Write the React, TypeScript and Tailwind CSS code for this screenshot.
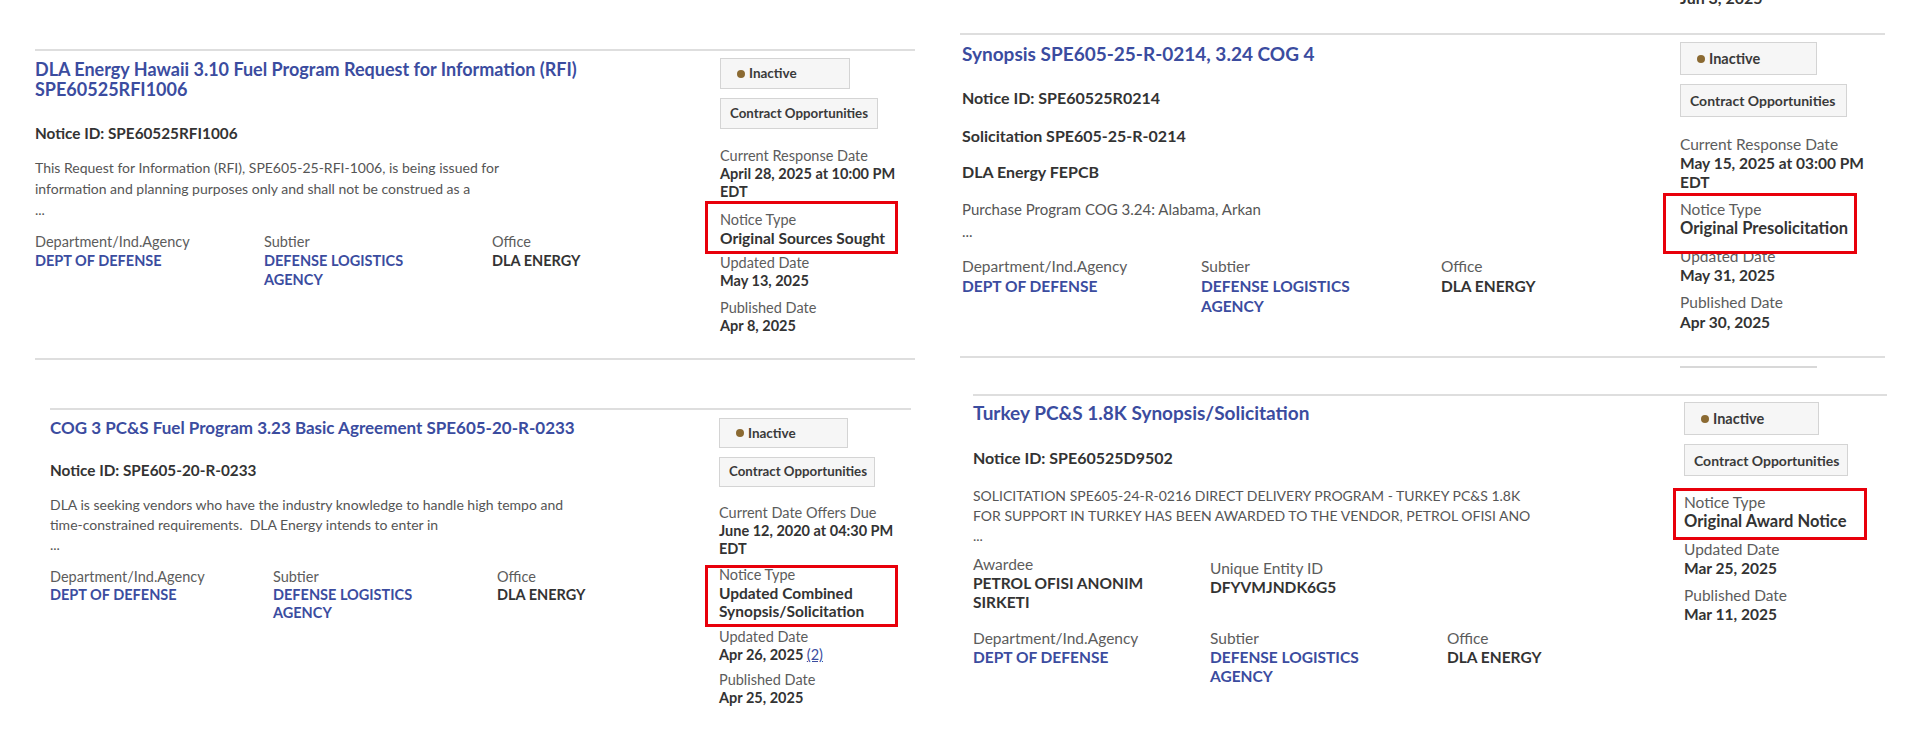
import React from 'react';

const BLUE = 'text-[#3b4c9f]';

const Badge: React.FC<{ className: string; dot?: boolean; children: React.ReactNode }> = ({ className, dot, children }) => (
    <div className={`flex items-center whitespace-nowrap border border-[#d4d4d4] bg-[#f6f6f6] font-bold text-[#3a3a3a] ${className}`}>
        {dot && <span className="mr-[4px] h-[8px] w-[8px] shrink-0 rounded-full bg-[#8b6a32]" />}
        {children}
    </div>
);

const Field: React.FC<{ label: string; className?: string; labelClass: string; valueClass: string; children: React.ReactNode }> = ({ label, className = '', labelClass, valueClass, children }) => (
    <div className={`relative ${className}`}>
        <div className={`text-[#5c5c5c] ${labelClass}`}>{label}</div>
        <div className={`font-bold text-[#333] ${valueClass}`}>{children}</div>
    </div>
);

const RedBox: React.FC<{ className: string }> = ({ className }) => (
    <span className={`pointer-events-none absolute border-[3px] border-[#e8000b] ${className}`} />
);

export default function App() {
    return (
        <div className="flex h-[729px] w-[1920px] overflow-hidden bg-white font-['Lato',sans-serif]">
            {/* left half */}
            <div className="w-[960px] shrink-0">
                {/* card 1 */}
                <div className="ml-[35px] mt-[49px] w-[880px]">
                    <div className="h-[2px] bg-[#dedede]" />
                    <div className="flex h-[307px]">
                        <div className="w-[685px] shrink-0 pt-[8px]">
                            <div className={`text-[18px] font-bold leading-[20px] ${BLUE}`}>
                                DLA Energy Hawaii 3.10 Fuel Program Request for Information (RFI)
                                <br />
                                SPE60525RFI1006
                            </div>
                            <div className="mt-[24px] text-[15.3px] font-bold leading-[20px] text-[#333]">Notice ID: SPE60525RFI1006</div>
                            <div className="mt-[14px] text-[14px] leading-[21px] text-[#555]">
                                This Request for Information (RFI), SPE605-25-RFI-1006, is being issued for
                                <br />
                                information and planning purposes only and shall not be construed as a
                                <br />
                                ...
                            </div>
                            <div className="mt-[12px] grid grid-cols-[229px_228px_1fr] text-[14.5px]">
                                <div>
                                    <div className="leading-[19px] text-[#5c5c5c]">Department/Ind.Agency</div>
                                    <div className={`font-bold leading-[19px] ${BLUE}`}>DEPT OF DEFENSE</div>
                                </div>
                                <div>
                                    <div className="leading-[19px] text-[#5c5c5c]">Subtier</div>
                                    <div className={`font-bold leading-[19px] ${BLUE}`}>DEFENSE LOGISTICS<br />AGENCY</div>
                                </div>
                                <div>
                                    <div className="leading-[19px] text-[#5c5c5c]">Office</div>
                                    <div className="font-bold leading-[19px] text-[#333]">DLA ENERGY</div>
                                </div>
                            </div>
                        </div>
                        <div className="flex-1 pt-[7px] text-[14.5px]">
                            <Badge className="h-[31px] w-[130px] pl-[16px] text-[13.5px]" dot>Inactive</Badge>
                            <Badge className="mt-[9px] h-[31px] w-[158px] pl-[9px] text-[13.3px]">Contract Opportunities</Badge>
                            <Field className="mt-[18px]" label="Current Response Date" labelClass="leading-[18px]" valueClass="leading-[18px]">
                                April 28, 2025 at 10:00 PM
                                <br />
                                EDT
                            </Field>
                            <Field className="mt-[10px]" label="Notice Type" labelClass="leading-[18px]" valueClass="leading-[18px] text-[15.5px]">
                                Original Sources Sought
                                <RedBox className="-left-[15px] -top-[10px] h-[53px] w-[193px]" />
                            </Field>
                            <Field className="mt-[7px]" label="Updated Date" labelClass="leading-[18px]" valueClass="leading-[18px]">
                                May 13, 2025
                            </Field>
                            <Field className="mt-[9px]" label="Published Date" labelClass="leading-[18px]" valueClass="leading-[18px]">
                                Apr 8, 2025
                            </Field>
                        </div>
                    </div>
                    <div className="h-[2px] bg-[#dedede]" />
                </div>

                {/* card 2 */}
                <div className="ml-[50px] mt-[48px] w-[861px]">
                    <div className="h-[2px] bg-[#dedede]" />
                    <div className="flex">
                        <div className="w-[669px] shrink-0 pt-[8px]">
                            <div className={`text-[17px] font-bold leading-[20px] ${BLUE}`}>
                                COG 3 PC&amp;S Fuel Program 3.23 Basic Agreement SPE605-20-R-0233
                            </div>
                            <div className="mt-[22px] text-[15.3px] font-bold leading-[20px] text-[#333]">Notice ID: SPE605-20-R-0233</div>
                            <div className="mt-[15px] text-[14px] leading-[20px] text-[#555]">
                                DLA is seeking vendors who have the industry knowledge to handle high tempo and
                                <br />
                                time-constrained requirements.&nbsp; DLA Energy intends to enter in
                                <br />
                                ...
                            </div>
                            <div className="mt-[12px] grid grid-cols-[223px_224px_1fr] text-[14.5px]">
                                <div>
                                    <div className="leading-[19px] text-[#5c5c5c]">Department/Ind.Agency</div>
                                    <div className={`font-bold leading-[18px] ${BLUE}`}>DEPT OF DEFENSE</div>
                                </div>
                                <div>
                                    <div className="leading-[19px] text-[#5c5c5c]">Subtier</div>
                                    <div className={`font-bold leading-[18px] ${BLUE}`}>DEFENSE LOGISTICS<br />AGENCY</div>
                                </div>
                                <div>
                                    <div className="leading-[19px] text-[#5c5c5c]">Office</div>
                                    <div className="font-bold leading-[18px] text-[#333]">DLA ENERGY</div>
                                </div>
                            </div>
                        </div>
                        <div className="flex-1 pt-[8px] text-[14.5px]">
                            <Badge className="h-[30px] w-[129px] pl-[16px] text-[13.5px]" dot>Inactive</Badge>
                            <Badge className="mt-[9px] h-[30px] w-[156px] pl-[9px] text-[13.3px]">Contract Opportunities</Badge>
                            <Field className="mt-[17px]" label="Current Date Offers Due" labelClass="leading-[18px]" valueClass="leading-[18px]">
                                June 12, 2020 at 04:30 PM
                                <br />
                                EDT
                            </Field>
                            <Field className="mt-[8px]" label="Notice Type" labelClass="leading-[18px]" valueClass="leading-[18px] text-[15.5px]">
                                Updated Combined
                                <br />
                                Synopsis/Solicitation
                                <RedBox className="-left-[14px] -top-[1px] h-[62px] w-[193px]" />
                            </Field>
                            <Field className="mt-[8px]" label="Updated Date" labelClass="leading-[18px]" valueClass="leading-[18px]">
                                Apr 26, 2025 <span className={`font-normal underline ${BLUE}`}>(2)</span>
                            </Field>
                            <Field className="mt-[7px]" label="Published Date" labelClass="leading-[18px]" valueClass="leading-[18px]">
                                Apr 25, 2025
                            </Field>
                        </div>
                    </div>
                </div>
            </div>

            {/* right half */}
            <div className="w-[960px] shrink-0">
                <div className="-mt-[12px] h-[20px] pl-[720px] text-[16px] font-bold leading-[20px] text-[#333]">Jun 3, 2025</div>

                {/* card 3 */}
                <div className="mt-[25px] w-[925px]">
                    <div className="h-[2px] bg-[#dedede]" />
                    <div className="flex h-[321px]">
                        <div className="w-[720px] shrink-0 pl-[2px] pt-[8px]">
                            <div className={`text-[19px] font-bold leading-[21px] ${BLUE}`}>Synopsis SPE605-25-R-0214, 3.24 COG 4</div>
                            <div className="mt-[24px] text-[16px] font-bold leading-[20px] text-[#333]">Notice ID: SPE60525R0214</div>
                            <div className="mt-[18px] text-[16px] font-bold leading-[20px] text-[#333]">Solicitation SPE605-25-R-0214</div>
                            <div className="mt-[16px] text-[16px] font-bold leading-[20px] text-[#333]">DLA Energy FEPCB</div>
                            <div className="mt-[16px] text-[15px] leading-[22px] text-[#555]">
                                Purchase Program COG 3.24: Alabama, Arkan
                                <br />
                                ...
                            </div>
                            <div className="mt-[14px] grid grid-cols-[239px_240px_1fr] text-[15.5px]">
                                <div>
                                    <div className="leading-[20px] text-[#5c5c5c]">Department/Ind.Agency</div>
                                    <div className={`font-bold leading-[20px] ${BLUE}`}>DEPT OF DEFENSE</div>
                                </div>
                                <div>
                                    <div className="leading-[20px] text-[#5c5c5c]">Subtier</div>
                                    <div className={`font-bold leading-[20px] ${BLUE}`}>DEFENSE LOGISTICS<br />AGENCY</div>
                                </div>
                                <div>
                                    <div className="leading-[20px] text-[#5c5c5c]">Office</div>
                                    <div className="font-bold leading-[20px] text-[#333]">DLA ENERGY</div>
                                </div>
                            </div>
                        </div>
                        <div className="flex-1 pt-[7px] text-[15.5px]">
                            <Badge className="h-[33px] w-[137px] pl-[16px] text-[14.5px]" dot>Inactive</Badge>
                            <Badge className="mt-[9px] h-[33px] w-[167px] pl-[9px] text-[14px]">Contract Opportunities</Badge>
                            <Field className="mt-[18px]" label="Current Response Date" labelClass="leading-[19px]" valueClass="leading-[19px]">
                                May 15, 2025 at 03:00 PM
                                <br />
                                EDT
                            </Field>
                            <Field className="mt-[8px]" label="Notice Type" labelClass="leading-[19px]" valueClass="leading-[19px] text-[16.5px]">
                                Original Presolicitation
                            </Field>
                            <Field className="mt-[9px]" label="Updated Date" labelClass="leading-[19px]" valueClass="leading-[19px]">
                                May 31, 2025
                            </Field>
                            <Field className="mt-[8px]" label="Published Date" labelClass="leading-[19px]" valueClass="leading-[20px]">
                                Apr 30, 2025
                            </Field>
                        </div>
                    </div>
                    <div className="relative h-[2px] bg-[#dedede]">
                        <RedBox className="bottom-[104px] left-[703px] h-[61px] w-[194px]" />
                    </div>
                </div>

                <div className="ml-[720px] mt-[8px] h-[2px] w-[137px] bg-[#d8d8d8]" />

                {/* card 4 */}
                <div className="ml-[13px] mt-[26px] w-[914px]">
                    <div className="h-[2px] bg-[#dedede]" />
                    <div className="flex">
                        <div className="w-[711px] shrink-0 pt-[6px]">
                            <div className={`text-[19px] font-bold leading-[21px] ${BLUE}`}>Turkey PC&amp;S 1.8K Synopsis/Solicitation</div>
                            <div className="mt-[25px] text-[16px] font-bold leading-[20px] text-[#333]">Notice ID: SPE60525D9502</div>
                            <div className="mt-[18px] text-[14px] leading-[20px] text-[#555]">
                                SOLICITATION SPE605-24-R-0216 DIRECT DELIVERY PROGRAM - TURKEY PC&amp;S 1.8K
                                <br />
                                FOR SUPPORT IN TURKEY HAS BEEN AWARDED TO THE VENDOR, PETROL OFISI ANO
                                <br />
                                ...
                            </div>
                            <div className="mt-[9px] grid grid-cols-[237px_237px_1fr] text-[15.5px]">
                                <div>
                                    <div className="leading-[19px] text-[#5c5c5c]">Awardee</div>
                                    <div className="font-bold leading-[19px] text-[#333]">PETROL OFISI ANONIM<br />SIRKETI</div>
                                </div>
                                <div className="pt-[4px]">
                                    <div className="leading-[19px] text-[#5c5c5c]">Unique Entity ID</div>
                                    <div className="font-bold leading-[19px] text-[#333]">DFYVMJNDK6G5</div>
                                </div>
                                <div />
                                <div className="mt-[16px]">
                                    <div className="leading-[20px] text-[#5c5c5c]">Department/Ind.Agency</div>
                                    <div className={`font-bold leading-[19px] ${BLUE}`}>DEPT OF DEFENSE</div>
                                </div>
                                <div className="mt-[16px]">
                                    <div className="leading-[20px] text-[#5c5c5c]">Subtier</div>
                                    <div className={`font-bold leading-[19px] ${BLUE}`}>DEFENSE LOGISTICS<br />AGENCY</div>
                                </div>
                                <div className="mt-[16px]">
                                    <div className="leading-[20px] text-[#5c5c5c]">Office</div>
                                    <div className="font-bold leading-[19px] text-[#333]">DLA ENERGY</div>
                                </div>
                            </div>
                        </div>
                        <div className="flex-1 pt-[6px] text-[15.5px]">
                            <Badge className="h-[33px] w-[135px] pl-[16px] text-[14.5px]" dot>Inactive</Badge>
                            <Badge className="mt-[9px] h-[32px] w-[164px] pl-[9px] text-[14px]">Contract Opportunities</Badge>
                            <Field className="mt-[17px]" label="Notice Type" labelClass="leading-[19px]" valueClass="leading-[19px] text-[16.5px]">
                                Original Award Notice
                                <RedBox className="-left-[11px] -top-[5px] h-[52px] w-[194px]" />
                            </Field>
                            <Field className="mt-[9px]" label="Updated Date" labelClass="leading-[19px]" valueClass="leading-[19px]">
                                Mar 25, 2025
                            </Field>
                            <Field className="mt-[8px]" label="Published Date" labelClass="leading-[19px]" valueClass="leading-[19px]">
                                Mar 11, 2025
                            </Field>
                        </div>
                    </div>
                </div>
            </div>
        </div>
    );
}
